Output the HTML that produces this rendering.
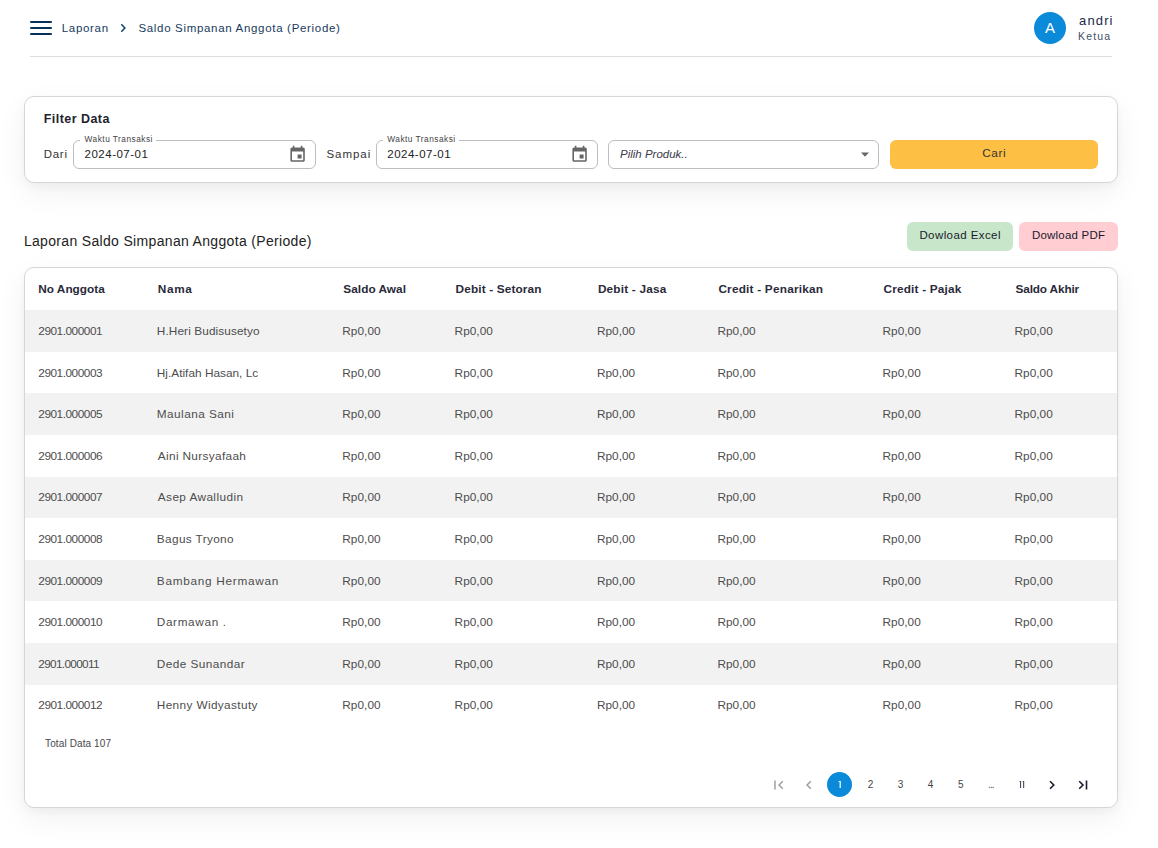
<!DOCTYPE html>
<html><head><meta charset="utf-8">
<style>
*{margin:0;padding:0;box-sizing:border-box}
html,body{width:1158px;height:848px;overflow:hidden;background:#fff;font-family:"Liberation Sans",sans-serif}
.a{position:absolute}
.t{position:absolute;white-space:nowrap;font-family:"Liberation Sans",sans-serif}
.bar{position:absolute;left:30px;width:22px;height:2.2px;border-radius:1.2px;background:#06325a}
.card{position:absolute;background:#fff;border:1px solid #d6d6d6;border-radius:10px;box-shadow:0 4px 8px rgba(0,0,0,0.035),0 10px 30px rgba(0,0,0,0.06)}
.inp{position:absolute;border:1px solid #bdbdbd;border-radius:6px;background:#fff}
.row{position:absolute;left:25px;width:1091px;height:41.6px}
.g{background:#f2f2f2}
</style></head><body>
<!-- header -->
<div class="bar" style="top:20.9px"></div>
<div class="bar" style="top:26.9px"></div>
<div class="bar" style="top:32.9px"></div>
<svg class="a" style="left:118px;top:23px" width="10" height="10" viewBox="0 0 10 10"><path d="M3.3 1.3 L6.9 5 L3.3 8.7" fill="none" stroke="#0f4470" stroke-width="1.5"/></svg>
<div class="a" style="left:1034px;top:12px;width:32px;height:32px;border-radius:50%;background:#0b8ad9"></div>
<div class="a" style="left:30px;top:56px;width:1082px;height:1px;background:#dedede"></div>

<!-- filter card -->
<div class="card" style="left:24px;top:96px;width:1094px;height:87px"></div>
<div class="inp" style="left:73px;top:140.2px;width:242.5px;height:28.5px"></div>
<div class="a" style="left:80px;top:138px;width:76px;height:5px;background:#fff"></div>
<div class="inp" style="left:376.2px;top:140.2px;width:221.5px;height:28.5px"></div>
<div class="a" style="left:383px;top:138px;width:76px;height:5px;background:#fff"></div>
<div class="inp" style="left:608.3px;top:140.2px;width:271.2px;height:28.5px"></div>
<svg class="a" style="left:287.8px;top:145.2px" width="19.2" height="19.2" viewBox="0 0 24 24"><path fill="#666" d="M17 12h-5v5h5v-5zM16 1v2H8V1H6v2H5c-1.11 0-1.99.9-1.99 2L3 19c0 1.1.89 2 2 2h14c1.1 0 2-.9 2-2V5c0-1.1-.9-2-2-2h-1V1h-2zm3 18H5V8h14v11z"/></svg>
<svg class="a" style="left:569.6px;top:145.2px" width="19.2" height="19.2" viewBox="0 0 24 24"><path fill="#666" d="M17 12h-5v5h5v-5zM16 1v2H8V1H6v2H5c-1.11 0-1.99.9-1.99 2L3 19c0 1.1.89 2 2 2h14c1.1 0 2-.9 2-2V5c0-1.1-.9-2-2-2h-1V1h-2zm3 18H5V8h14v11z"/></svg>
<svg class="a" style="left:860px;top:152px" width="10" height="6" viewBox="0 0 10 6"><path d="M1 0.5 L9 0.5 L5 4.8 Z" fill="#666"/></svg>
<div class="a" style="left:890px;top:140.2px;width:208px;height:28.5px;border-radius:6px;background:#fdbf44"></div>

<!-- buttons -->
<div class="a" style="left:907.3px;top:222.3px;width:105.5px;height:28.4px;border-radius:6px;background:#c8e6c9"></div>
<div class="a" style="left:1019.1px;top:222.3px;width:98.7px;height:28.4px;border-radius:6px;background:#ffcdd2"></div>

<!-- table card -->
<div class="card" style="left:24px;top:267px;width:1094px;height:541px"></div>
<div class="a g" style="left:25px;top:310.20px;width:1092px;height:41.6px"></div>
<div class="a g" style="left:25px;top:393.40px;width:1092px;height:41.6px"></div>
<div class="a g" style="left:25px;top:476.60px;width:1092px;height:41.6px"></div>
<div class="a g" style="left:25px;top:559.80px;width:1092px;height:41.6px"></div>
<div class="a g" style="left:25px;top:643.00px;width:1092px;height:41.6px"></div>
<!-- pagination -->
<div class="a" style="left:827px;top:772px;width:25px;height:25px;border-radius:50%;background:#0b8ad9"></div>
<svg class="a" style="left:830px;top:775px" width="20" height="20" viewBox="0 0 20 20"><path d="M9.1 6H10.8V13H9.6V7.1H8.2Z" fill="#fff"/></svg>
<svg class="a" style="left:1010px;top:775px" width="20" height="20" viewBox="0 0 20 20"><path d="M10 6H11.1V13H10V7.1H9Z M13.1 6H14.2V13H13.1V7.1H12.1Z" fill="#4a4a5a"/></svg>
<svg class="a" style="left:772px;top:779px" width="14" height="12" viewBox="0 0 14 12"><path d="M3 1.5V10.5" stroke="#9a9a9a" stroke-width="1.4" fill="none"/><path d="M10.8 2.2L7 6L10.8 9.8" stroke="#9a9a9a" stroke-width="1.4" fill="none"/></svg>
<svg class="a" style="left:803px;top:779px" width="12" height="12" viewBox="0 0 12 12"><path d="M7.8 2.2L4 6L7.8 9.8" stroke="#9a9a9a" stroke-width="1.4" fill="none"/></svg>
<svg class="a" style="left:1046px;top:779px" width="12" height="12" viewBox="0 0 12 12"><path d="M4 2.2L7.8 6L4 9.8" stroke="#1a1a2a" stroke-width="1.6" fill="none"/></svg>
<svg class="a" style="left:1076px;top:779px" width="14" height="12" viewBox="0 0 14 12"><path d="M3.2 2.2L7 6L3.2 9.8" stroke="#1a1a2a" stroke-width="1.6" fill="none"/><path d="M10.5 1.5V10.5" stroke="#1a1a2a" stroke-width="1.6" fill="none"/></svg>
<span class="t" style="left:61.70px;top:18px;font-size:11.5px;line-height:20px;color:#173a5e;letter-spacing:0.700px;">Laporan</span>
<span class="t" style="left:138.40px;top:18px;font-size:11.5px;line-height:20px;color:#173a5e;letter-spacing:0.684px;">Saldo Simpanan Anggota (Periode)</span>
<span class="t" style="left:1079.00px;top:11px;font-size:13px;line-height:20px;color:#1b2a49;letter-spacing:1.150px;">andri</span>
<span class="t" style="left:1078.00px;top:26px;font-size:10.5px;line-height:20px;color:#3f4d66;letter-spacing:1.150px;">Ketua</span>
<span class="t" style="left:1045.00px;top:18px;font-size:15px;line-height:20px;color:#ffffff;">A</span>
<span class="t" style="left:43.70px;top:109px;font-size:12.5px;line-height:20px;color:#22222e;font-weight:700;letter-spacing:0.460px;">Filter Data</span>
<span class="t" style="left:43.70px;top:144px;font-size:11.5px;line-height:20px;color:#333;letter-spacing:0.733px;">Dari</span>
<span class="t" style="left:84.60px;top:129px;font-size:8.3px;line-height:20px;color:#444;letter-spacing:0.486px;">Waktu Transaksi</span>
<span class="t" style="left:84.60px;top:144px;font-size:11.5px;line-height:20px;color:#222;letter-spacing:0.489px;">2024-07-01</span>
<span class="t" style="left:326.40px;top:144px;font-size:11.5px;line-height:20px;color:#333;letter-spacing:0.960px;">Sampai</span>
<span class="t" style="left:387.30px;top:129px;font-size:8.3px;line-height:20px;color:#444;letter-spacing:0.486px;">Waktu Transaksi</span>
<span class="t" style="left:387.30px;top:144px;font-size:11.5px;line-height:20px;color:#222;letter-spacing:0.489px;">2024-07-01</span>
<span class="t" style="left:620.00px;top:144px;font-size:11.5px;line-height:20px;color:#3a3a4a;font-style:italic;">Pilih Produk..</span>
<span class="t" style="left:982.30px;top:143px;font-size:11.8px;line-height:20px;color:#333;letter-spacing:0.533px;">Cari</span>
<span class="t" style="left:23.90px;top:231px;font-size:14px;line-height:20px;color:#222;letter-spacing:0.328px;">Laporan Saldo Simpanan Anggota (Periode)</span>
<span class="t" style="left:919.40px;top:225px;font-size:11.5px;line-height:20px;color:#1a1a2e;letter-spacing:0.417px;">Dowload Excel</span>
<span class="t" style="left:1032.00px;top:225px;font-size:11.5px;line-height:20px;color:#1a1a2e;letter-spacing:0.200px;">Dowload PDF</span>
<span class="t" style="left:38.30px;top:279px;font-size:11.8px;line-height:20px;color:#2a2a3a;font-weight:700;">No Anggota</span>
<span class="t" style="left:157.80px;top:279px;font-size:11.8px;line-height:20px;color:#2a2a3a;font-weight:700;letter-spacing:0.667px;">Nama</span>
<span class="t" style="left:343.30px;top:279px;font-size:11.8px;line-height:20px;color:#2a2a3a;font-weight:700;letter-spacing:0.044px;">Saldo Awal</span>
<span class="t" style="left:455.60px;top:279px;font-size:11.8px;line-height:20px;color:#2a2a3a;font-weight:700;letter-spacing:0.143px;">Debit - Setoran</span>
<span class="t" style="left:597.90px;top:279px;font-size:11.8px;line-height:20px;color:#2a2a3a;font-weight:700;letter-spacing:0.200px;">Debit - Jasa</span>
<span class="t" style="left:718.40px;top:279px;font-size:11.8px;line-height:20px;color:#2a2a3a;font-weight:700;letter-spacing:0.212px;">Credit - Penarikan</span>
<span class="t" style="left:883.50px;top:279px;font-size:11.8px;line-height:20px;color:#2a2a3a;font-weight:700;letter-spacing:0.185px;">Credit - Pajak</span>
<span class="t" style="left:1015.50px;top:279px;font-size:11.8px;line-height:20px;color:#2a2a3a;font-weight:700;letter-spacing:-0.140px;">Saldo Akhir</span>
<span class="t" style="left:38.30px;top:321px;font-size:11.8px;line-height:20px;color:#4d4d4d;letter-spacing:-0.460px;">2901.000001</span>
<span class="t" style="left:156.80px;top:321px;font-size:11.8px;line-height:20px;color:#4d4d4d;letter-spacing:0.106px;">H.Heri Budisusetyo</span>
<span class="t" style="left:342.30px;top:321px;font-size:11.8px;line-height:20px;color:#4d4d4d;letter-spacing:0.040px;">Rp0,00</span>
<span class="t" style="left:454.60px;top:321px;font-size:11.8px;line-height:20px;color:#4d4d4d;letter-spacing:0.040px;">Rp0,00</span>
<span class="t" style="left:596.90px;top:321px;font-size:11.8px;line-height:20px;color:#4d4d4d;letter-spacing:0.040px;">Rp0,00</span>
<span class="t" style="left:717.40px;top:321px;font-size:11.8px;line-height:20px;color:#4d4d4d;letter-spacing:0.040px;">Rp0,00</span>
<span class="t" style="left:882.50px;top:321px;font-size:11.8px;line-height:20px;color:#4d4d4d;letter-spacing:0.040px;">Rp0,00</span>
<span class="t" style="left:1014.50px;top:321px;font-size:11.8px;line-height:20px;color:#4d4d4d;letter-spacing:0.040px;">Rp0,00</span>
<span class="t" style="left:38.30px;top:363px;font-size:11.8px;line-height:20px;color:#4d4d4d;letter-spacing:-0.460px;">2901.000003</span>
<span class="t" style="left:156.80px;top:363px;font-size:11.8px;line-height:20px;color:#4d4d4d;letter-spacing:0.022px;">Hj.Atifah Hasan, Lc</span>
<span class="t" style="left:342.30px;top:363px;font-size:11.8px;line-height:20px;color:#4d4d4d;letter-spacing:0.040px;">Rp0,00</span>
<span class="t" style="left:454.60px;top:363px;font-size:11.8px;line-height:20px;color:#4d4d4d;letter-spacing:0.040px;">Rp0,00</span>
<span class="t" style="left:596.90px;top:363px;font-size:11.8px;line-height:20px;color:#4d4d4d;letter-spacing:0.040px;">Rp0,00</span>
<span class="t" style="left:717.40px;top:363px;font-size:11.8px;line-height:20px;color:#4d4d4d;letter-spacing:0.040px;">Rp0,00</span>
<span class="t" style="left:882.50px;top:363px;font-size:11.8px;line-height:20px;color:#4d4d4d;letter-spacing:0.040px;">Rp0,00</span>
<span class="t" style="left:1014.50px;top:363px;font-size:11.8px;line-height:20px;color:#4d4d4d;letter-spacing:0.040px;">Rp0,00</span>
<span class="t" style="left:38.30px;top:404px;font-size:11.8px;line-height:20px;color:#4d4d4d;letter-spacing:-0.460px;">2901.000005</span>
<span class="t" style="left:156.80px;top:404px;font-size:11.8px;line-height:20px;color:#4d4d4d;letter-spacing:0.455px;">Maulana Sani</span>
<span class="t" style="left:342.30px;top:404px;font-size:11.8px;line-height:20px;color:#4d4d4d;letter-spacing:0.040px;">Rp0,00</span>
<span class="t" style="left:454.60px;top:404px;font-size:11.8px;line-height:20px;color:#4d4d4d;letter-spacing:0.040px;">Rp0,00</span>
<span class="t" style="left:596.90px;top:404px;font-size:11.8px;line-height:20px;color:#4d4d4d;letter-spacing:0.040px;">Rp0,00</span>
<span class="t" style="left:717.40px;top:404px;font-size:11.8px;line-height:20px;color:#4d4d4d;letter-spacing:0.040px;">Rp0,00</span>
<span class="t" style="left:882.50px;top:404px;font-size:11.8px;line-height:20px;color:#4d4d4d;letter-spacing:0.040px;">Rp0,00</span>
<span class="t" style="left:1014.50px;top:404px;font-size:11.8px;line-height:20px;color:#4d4d4d;letter-spacing:0.040px;">Rp0,00</span>
<span class="t" style="left:38.30px;top:446px;font-size:11.8px;line-height:20px;color:#4d4d4d;letter-spacing:-0.460px;">2901.000006</span>
<span class="t" style="left:157.80px;top:446px;font-size:11.8px;line-height:20px;color:#4d4d4d;letter-spacing:0.343px;">Aini Nursyafaah</span>
<span class="t" style="left:342.30px;top:446px;font-size:11.8px;line-height:20px;color:#4d4d4d;letter-spacing:0.040px;">Rp0,00</span>
<span class="t" style="left:454.60px;top:446px;font-size:11.8px;line-height:20px;color:#4d4d4d;letter-spacing:0.040px;">Rp0,00</span>
<span class="t" style="left:596.90px;top:446px;font-size:11.8px;line-height:20px;color:#4d4d4d;letter-spacing:0.040px;">Rp0,00</span>
<span class="t" style="left:717.40px;top:446px;font-size:11.8px;line-height:20px;color:#4d4d4d;letter-spacing:0.040px;">Rp0,00</span>
<span class="t" style="left:882.50px;top:446px;font-size:11.8px;line-height:20px;color:#4d4d4d;letter-spacing:0.040px;">Rp0,00</span>
<span class="t" style="left:1014.50px;top:446px;font-size:11.8px;line-height:20px;color:#4d4d4d;letter-spacing:0.040px;">Rp0,00</span>
<span class="t" style="left:38.30px;top:487px;font-size:11.8px;line-height:20px;color:#4d4d4d;letter-spacing:-0.460px;">2901.000007</span>
<span class="t" style="left:157.80px;top:487px;font-size:11.8px;line-height:20px;color:#4d4d4d;letter-spacing:0.415px;">Asep Awalludin</span>
<span class="t" style="left:342.30px;top:487px;font-size:11.8px;line-height:20px;color:#4d4d4d;letter-spacing:0.040px;">Rp0,00</span>
<span class="t" style="left:454.60px;top:487px;font-size:11.8px;line-height:20px;color:#4d4d4d;letter-spacing:0.040px;">Rp0,00</span>
<span class="t" style="left:596.90px;top:487px;font-size:11.8px;line-height:20px;color:#4d4d4d;letter-spacing:0.040px;">Rp0,00</span>
<span class="t" style="left:717.40px;top:487px;font-size:11.8px;line-height:20px;color:#4d4d4d;letter-spacing:0.040px;">Rp0,00</span>
<span class="t" style="left:882.50px;top:487px;font-size:11.8px;line-height:20px;color:#4d4d4d;letter-spacing:0.040px;">Rp0,00</span>
<span class="t" style="left:1014.50px;top:487px;font-size:11.8px;line-height:20px;color:#4d4d4d;letter-spacing:0.040px;">Rp0,00</span>
<span class="t" style="left:38.30px;top:529px;font-size:11.8px;line-height:20px;color:#4d4d4d;letter-spacing:-0.460px;">2901.000008</span>
<span class="t" style="left:156.80px;top:529px;font-size:11.8px;line-height:20px;color:#4d4d4d;letter-spacing:0.364px;">Bagus Tryono</span>
<span class="t" style="left:342.30px;top:529px;font-size:11.8px;line-height:20px;color:#4d4d4d;letter-spacing:0.040px;">Rp0,00</span>
<span class="t" style="left:454.60px;top:529px;font-size:11.8px;line-height:20px;color:#4d4d4d;letter-spacing:0.040px;">Rp0,00</span>
<span class="t" style="left:596.90px;top:529px;font-size:11.8px;line-height:20px;color:#4d4d4d;letter-spacing:0.040px;">Rp0,00</span>
<span class="t" style="left:717.40px;top:529px;font-size:11.8px;line-height:20px;color:#4d4d4d;letter-spacing:0.040px;">Rp0,00</span>
<span class="t" style="left:882.50px;top:529px;font-size:11.8px;line-height:20px;color:#4d4d4d;letter-spacing:0.040px;">Rp0,00</span>
<span class="t" style="left:1014.50px;top:529px;font-size:11.8px;line-height:20px;color:#4d4d4d;letter-spacing:0.040px;">Rp0,00</span>
<span class="t" style="left:38.30px;top:571px;font-size:11.8px;line-height:20px;color:#4d4d4d;letter-spacing:-0.460px;">2901.000009</span>
<span class="t" style="left:156.80px;top:571px;font-size:11.8px;line-height:20px;color:#4d4d4d;letter-spacing:0.720px;">Bambang Hermawan</span>
<span class="t" style="left:342.30px;top:571px;font-size:11.8px;line-height:20px;color:#4d4d4d;letter-spacing:0.040px;">Rp0,00</span>
<span class="t" style="left:454.60px;top:571px;font-size:11.8px;line-height:20px;color:#4d4d4d;letter-spacing:0.040px;">Rp0,00</span>
<span class="t" style="left:596.90px;top:571px;font-size:11.8px;line-height:20px;color:#4d4d4d;letter-spacing:0.040px;">Rp0,00</span>
<span class="t" style="left:717.40px;top:571px;font-size:11.8px;line-height:20px;color:#4d4d4d;letter-spacing:0.040px;">Rp0,00</span>
<span class="t" style="left:882.50px;top:571px;font-size:11.8px;line-height:20px;color:#4d4d4d;letter-spacing:0.040px;">Rp0,00</span>
<span class="t" style="left:1014.50px;top:571px;font-size:11.8px;line-height:20px;color:#4d4d4d;letter-spacing:0.040px;">Rp0,00</span>
<span class="t" style="left:38.30px;top:612px;font-size:11.8px;line-height:20px;color:#4d4d4d;letter-spacing:-0.460px;">2901.000010</span>
<span class="t" style="left:156.80px;top:612px;font-size:11.8px;line-height:20px;color:#4d4d4d;letter-spacing:0.622px;">Darmawan .</span>
<span class="t" style="left:342.30px;top:612px;font-size:11.8px;line-height:20px;color:#4d4d4d;letter-spacing:0.040px;">Rp0,00</span>
<span class="t" style="left:454.60px;top:612px;font-size:11.8px;line-height:20px;color:#4d4d4d;letter-spacing:0.040px;">Rp0,00</span>
<span class="t" style="left:596.90px;top:612px;font-size:11.8px;line-height:20px;color:#4d4d4d;letter-spacing:0.040px;">Rp0,00</span>
<span class="t" style="left:717.40px;top:612px;font-size:11.8px;line-height:20px;color:#4d4d4d;letter-spacing:0.040px;">Rp0,00</span>
<span class="t" style="left:882.50px;top:612px;font-size:11.8px;line-height:20px;color:#4d4d4d;letter-spacing:0.040px;">Rp0,00</span>
<span class="t" style="left:1014.50px;top:612px;font-size:11.8px;line-height:20px;color:#4d4d4d;letter-spacing:0.040px;">Rp0,00</span>
<span class="t" style="left:38.30px;top:654px;font-size:11.8px;line-height:20px;color:#4d4d4d;letter-spacing:-0.680px;">2901.000011</span>
<span class="t" style="left:156.80px;top:654px;font-size:11.8px;line-height:20px;color:#4d4d4d;letter-spacing:0.433px;">Dede Sunandar</span>
<span class="t" style="left:342.30px;top:654px;font-size:11.8px;line-height:20px;color:#4d4d4d;letter-spacing:0.040px;">Rp0,00</span>
<span class="t" style="left:454.60px;top:654px;font-size:11.8px;line-height:20px;color:#4d4d4d;letter-spacing:0.040px;">Rp0,00</span>
<span class="t" style="left:596.90px;top:654px;font-size:11.8px;line-height:20px;color:#4d4d4d;letter-spacing:0.040px;">Rp0,00</span>
<span class="t" style="left:717.40px;top:654px;font-size:11.8px;line-height:20px;color:#4d4d4d;letter-spacing:0.040px;">Rp0,00</span>
<span class="t" style="left:882.50px;top:654px;font-size:11.8px;line-height:20px;color:#4d4d4d;letter-spacing:0.040px;">Rp0,00</span>
<span class="t" style="left:1014.50px;top:654px;font-size:11.8px;line-height:20px;color:#4d4d4d;letter-spacing:0.040px;">Rp0,00</span>
<span class="t" style="left:38.30px;top:695px;font-size:11.8px;line-height:20px;color:#4d4d4d;letter-spacing:-0.460px;">2901.000012</span>
<span class="t" style="left:156.80px;top:695px;font-size:11.8px;line-height:20px;color:#4d4d4d;letter-spacing:0.373px;">Henny Widyastuty</span>
<span class="t" style="left:342.30px;top:695px;font-size:11.8px;line-height:20px;color:#4d4d4d;letter-spacing:0.040px;">Rp0,00</span>
<span class="t" style="left:454.60px;top:695px;font-size:11.8px;line-height:20px;color:#4d4d4d;letter-spacing:0.040px;">Rp0,00</span>
<span class="t" style="left:596.90px;top:695px;font-size:11.8px;line-height:20px;color:#4d4d4d;letter-spacing:0.040px;">Rp0,00</span>
<span class="t" style="left:717.40px;top:695px;font-size:11.8px;line-height:20px;color:#4d4d4d;letter-spacing:0.040px;">Rp0,00</span>
<span class="t" style="left:882.50px;top:695px;font-size:11.8px;line-height:20px;color:#4d4d4d;letter-spacing:0.040px;">Rp0,00</span>
<span class="t" style="left:1014.50px;top:695px;font-size:11.8px;line-height:20px;color:#4d4d4d;letter-spacing:0.040px;">Rp0,00</span>
<span class="t" style="left:45.10px;top:734px;font-size:10px;line-height:20px;color:#484848;letter-spacing:0.108px;">Total Data 107</span>
<span class="t" style="left:867.70px;top:775px;font-size:10px;line-height:20px;color:#444;">2</span>
<span class="t" style="left:897.70px;top:775px;font-size:10px;line-height:20px;color:#444;">3</span>
<span class="t" style="left:927.80px;top:775px;font-size:10px;line-height:20px;color:#444;">4</span>
<span class="t" style="left:958.00px;top:775px;font-size:10px;line-height:20px;color:#444;">5</span>
<span class="t" style="left:988.00px;top:775px;font-size:10px;line-height:20px;color:#555;letter-spacing:-0.900px;">...</span>
</body></html>
